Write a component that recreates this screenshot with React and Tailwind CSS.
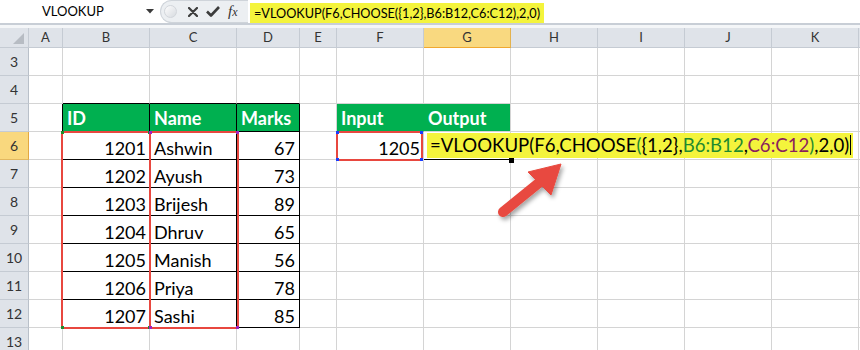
import React from 'react';

const COLS = [
  { id: 'A', w: 'w-[34px]' },
  { id: 'B', w: 'w-[87px]' },
  { id: 'C', w: 'w-[87px]' },
  { id: 'D', w: 'w-[63px]' },
  { id: 'E', w: 'w-[37px]' },
  { id: 'F', w: 'w-[87px]' },
  { id: 'G', w: 'w-[87px]' },
  { id: 'H', w: 'w-[87px]' },
  { id: 'I', w: 'w-[87px]' },
  { id: 'J', w: 'w-[87px]' },
  { id: 'K', w: 'w-[87px]' },
  { id: '', w: 'w-[40px]' },
];

const ROWS = [3, 4, 5, 6, 7, 8, 9, 10, 11, 12, 13];

const STUDENTS = [
  [1201, 'Ashwin', 67],
  [1202, 'Ayush', 73],
  [1203, 'Brijesh', 89],
  [1204, 'Dhruv', 65],
  [1205, 'Manish', 56],
  [1206, 'Priya', 78],
  [1207, 'Sashi', 85],
];

const FORMULA = '=VLOOKUP(F6,CHOOSE({1,2},B6:B12,C6:C12),2,0)';

// formula as excel colours it while the cell is being edited
const ColoredFormula = () => (
  <>
    <span>=VLOOKUP(F6,CHOOSE</span>
    <span className="text-[#1f8a2e]">(</span>
    <span>{'{1,2},'}</span>
    <span className="text-[#1f8a2e]">B6:B12</span>
    <span>,</span>
    <span className="text-[#8a1f5c]">C6:C12</span>
    <span className="text-[#1f8a2e]">)</span>
    <span>,2,0)</span>
  </>
);

const getCell = (col, row) => {
  const inTable = ['B', 'C', 'D'].includes(col) && row >= 5 && row <= 12;
  let border = 'border-[#d4d4d4]';
  if (inTable) border = 'border-black';
  else if (col === 'A' && row >= 5 && row <= 12) border = 'border-r-black border-b-[#d4d4d4]';
  else if (row === 4 && ['B', 'C', 'D'].includes(col)) border = 'border-r-[#d4d4d4] border-b-black';
  else if (row === 5 && col === 'F') border = 'border-r-[#00b050] border-b-[#d4d4d4]';

  const header = { B: 'ID', C: 'Name', D: 'Marks', F: 'Input', G: 'Output' };
  if (row === 5 && header[col]) {
    return {
      border,
      bg: 'bg-[#00b050]',
      content: <span className="pl-[4px] pb-[2px] font-bold text-white leading-[22px]">{header[col]}</span>,
    };
  }

  if (row >= 6 && row <= 12) {
    const [id, name, marks] = STUDENTS[row - 6];
    if (col === 'B') return { border, bg: '', align: 'justify-end', content: <span className="pr-[3px] leading-[22px]">{id}</span> };
    if (col === 'C') return { border, bg: '', content: <span className="pl-[4px] leading-[22px]">{name}</span> };
    if (col === 'D') return { border, bg: '', align: 'justify-end', content: <span className="pr-[4px] leading-[22px]">{marks}</span> };
  }

  if (row === 6 && col === 'F') {
    return { border, bg: '', align: 'justify-end', content: <span className="pr-[3px] leading-[22px]">1205</span> };
  }
  if (row === 6 && col === 'G') {
    return {
      border: 'border-r-[#d4d4d4] border-b-black',
      bg: '',
      content: (
        <span className="relative z-20 ml-[3px] mb-[1px] whitespace-nowrap bg-[#f4f43c] pl-[3px] pr-[2px] text-[18.6px] leading-[25px] text-black">
          <ColoredFormula />
          <span className="ml-[1px] inline-block h-[20px] w-[1px] bg-black align-[-3px]" />
        </span>
      ),
    };
  }
  if (row === 5 && col === 'G') return { border: 'border-r-[#d4d4d4] border-b-black', bg: 'bg-[#00b050]', content: null };
  return { border, bg: '', content: null };
};

const FormulaBar = () => (
  <div className="flex h-[25px] border-b-2 border-[#c8ced6] bg-white">
    <div className="flex w-[160px] shrink-0 items-center">
      <span className="pl-[42px] text-[13px] leading-none text-black">VLOOKUP</span>
      <svg className="ml-auto mr-[6px]" width="8" height="5" viewBox="0 0 8 5">
        <path d="M0 0h8L4 4.5z" fill="#3a3a3a" />
      </svg>
    </div>
    <div className="flex w-[88px] shrink-0 items-center rounded-l-full border border-r-0 border-[#cfd4da] bg-[#eceff2]">
      <div className="ml-[3px] h-[13px] w-[13px] rounded-full border border-[#d2d6db] bg-gradient-to-br from-[#fdfdfd] to-[#d7dbe0]" />
      <svg className="ml-[11px]" width="10" height="10" viewBox="0 0 10 10">
        <path d="M1 1L9 9M9 1L1 9" stroke="#3c3c3c" strokeWidth="2.2" strokeLinecap="round" />
      </svg>
      <svg className="ml-[8px]" width="14" height="11" viewBox="0 0 14 11">
        <path d="M1 5.5L5 9.5L13 1" stroke="#3c3c3c" strokeWidth="2.6" fill="none" strokeLinejoin="round" />
      </svg>
      <span className="ml-[8px] font-[family-name:'Liberation_Serif',serif] text-[15px] italic leading-none text-[#333]">
        f<span className="text-[12px]">x</span>
      </span>
    </div>
    <div className="flex flex-1 items-start pl-[2px]">
      <span className="mt-[3px] h-[20px] bg-[#f4f43c] px-[4px] text-[12.7px] leading-[20px] text-black">{FORMULA}</span>
    </div>
  </div>
);

const ColumnHeaders = () => (
  <div className="flex h-[20px]">
    <div className="flex w-[29px] shrink-0 items-end justify-end border-r border-b border-[#c5cbd3] bg-[#dfe3e9] pr-[4px] pb-[3px]">
      <svg width="11" height="11" viewBox="0 0 11 11">
        <path d="M11 0V11H0z" fill="#b7bcc3" />
      </svg>
    </div>
    {COLS.map((c) => (
      <div
        key={c.w + c.id}
        className={`${c.w} shrink-0 flex items-center justify-center border-r border-b text-[13px] ${
          c.id === 'G' ? 'bg-[#f9d980] border-r-[#e4b24e] border-b-[#f0a830]' : 'bg-[#dfe3e9] border-[#c5cbd3]'
        } text-[#333]`}
      >
        {c.id}
      </div>
    ))}
  </div>
);

const Sheet = () => (
  <div className="text-[18px] text-black">
    <ColumnHeaders />
    {ROWS.map((r) => (
      <div key={r} className="flex h-[28px]">
        <div
          className={`w-[29px] shrink-0 flex items-center justify-center border-r border-b text-[14px] text-[#333] ${
            r === 6 ? 'bg-[#f9d87e] border-r-[#e2a842] border-b-[#e2b860]' : 'bg-[#dfe3e9] border-r-[#b9c0c9] border-b-[#c5cbd3]'
          }`}
        >
          {r}
        </div>
        {COLS.map((c) => {
          const cell = getCell(c.id, r);
          return (
            <div
              key={c.w + c.id}
              className={`${c.w} shrink-0 flex items-end border-r border-b ${cell.border} ${cell.bg} ${cell.align || ''}`}
            >
              {cell.content}
            </div>
          );
        })}
      </div>
    ))}
  </div>
);

// reference box excel draws round a range in the formula, with its corner handles
const RangeBox = ({ className, handle }) => (
  <div className={`absolute z-10 flex flex-col justify-between border-2 border-[#e8473f] ${className}`}>
    <div className="-m-[2px] flex justify-between">
      <div className={`h-[3px] w-[3px] ${handle}`} />
      <div className={`h-[3px] w-[3px] ${handle}`} />
    </div>
    <div className="-m-[2px] flex justify-between">
      <div className={`h-[3px] w-[3px] ${handle}`} />
      <div className={`h-[3px] w-[3px] ${handle}`} />
    </div>
  </div>
);

const Arrow = () => (
  <svg className="absolute left-[480px] top-[150px] z-30" width="100" height="85" viewBox="480 150 100 85">
    <defs>
      <filter id="shadow" x="-30%" y="-30%" width="160%" height="160%">
        <feDropShadow dx="2" dy="3" stdDeviation="2" floodColor="#000" floodOpacity="0.35" />
      </filter>
    </defs>
    <g filter="url(#shadow)" fill="#e84a3f" stroke="#e84a3f">
      <line x1="503" y1="212" x2="540" y2="182" strokeWidth="10" strokeLinecap="round" />
      <path d="M561 164L528 172L551 195z" strokeWidth="1" strokeLinejoin="round" />
    </g>
  </svg>
);

export default function App() {
  return (
    <div className="relative h-[350px] w-[860px] overflow-hidden bg-white font-[family-name:Lato,sans-serif]">
      <FormulaBar />
      <div className="h-[3px] bg-[#f4f6f8]" />
      <Sheet />
      <RangeBox className="left-[61px] top-[131px] h-[198px] w-[90px]" handle="bg-[#1e8c2a]" />
      <RangeBox className="left-[149px] top-[131px] h-[198px] w-[90px]" handle="bg-[#a020c0]" />
      <RangeBox className="left-[336px] top-[131px] h-[30px] w-[87px]" handle="bg-[#1a3cff]" />
      {/* fill handle of the active cell G6 */}
      <div className="absolute left-[509px] top-[158px] z-10 h-[5px] w-[5px] bg-black" />
      <Arrow />
    </div>
  );
}
